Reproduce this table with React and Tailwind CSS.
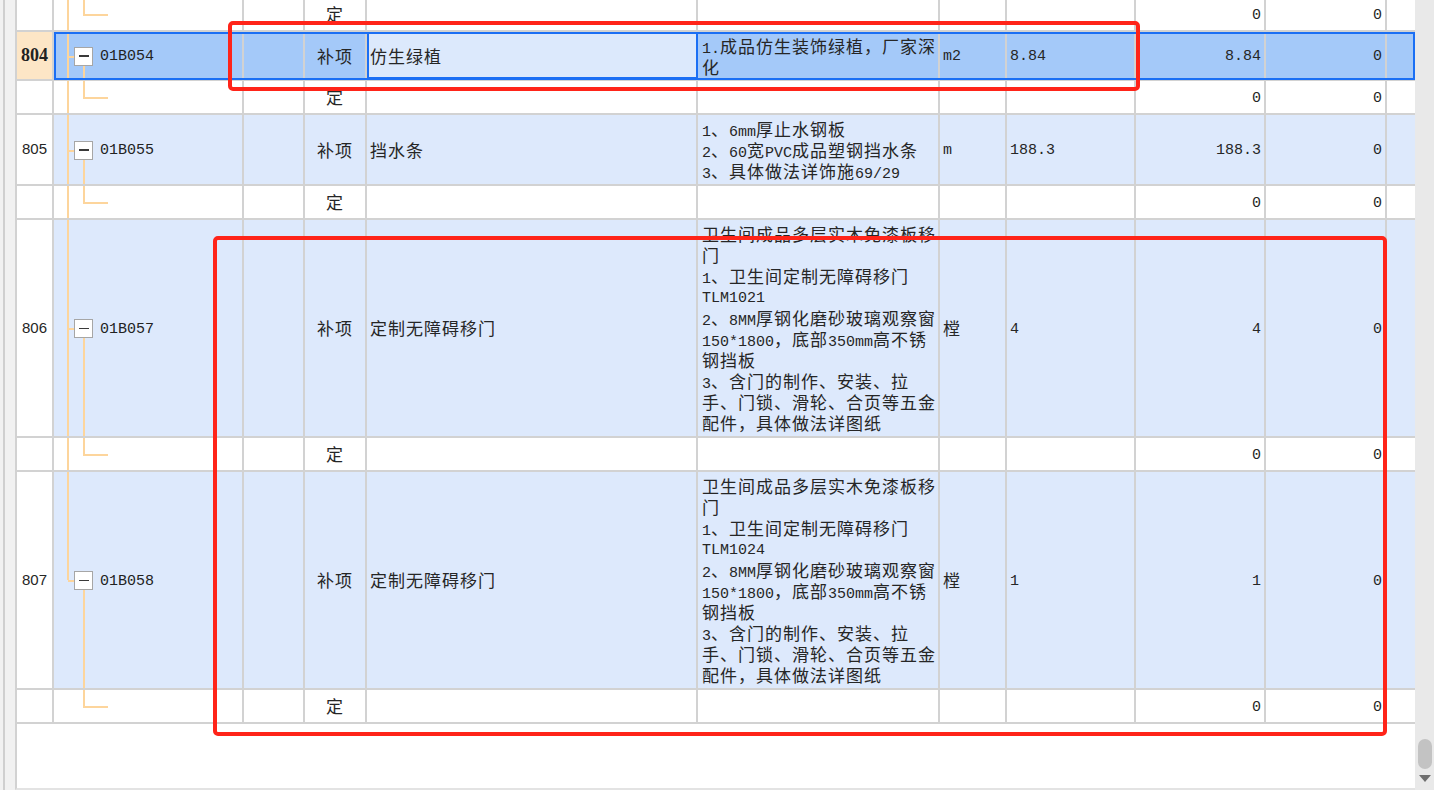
import React from 'react';

// column widths, line to line (x 17 .. 1415)
const W = [37, 190, 61, 62, 331, 242, 67, 129, 130, 121, 28];

const DOOR = (tlm) => [
  '卫生间成品多层实木免漆板移',
  '门',
  '1、卫生间定制无障碍移门',
  tlm,
  '2、8MM厚钢化磨砂玻璃观察窗',
  '150*1800，底部350mm高不锈',
  '钢挡板',
  '3、含门的制作、安装、拉',
  '手、门锁、滑轮、合页等五金',
  '配件，具体做法详图纸',
];

const ROWS = [
  { kind: 'ding', h: 'h-[34px] -mt-[2px]' },
  {
    kind: 'item',
    h: 'h-[49px]',
    num: '804',
    selected: true,
    code: '01B054',
    name: '仿生绿植',
    desc: ['1.成品仿生装饰绿植，厂家深', '化'],
    unit: 'm2',
    qty: '8.84',
    v1: '8.84',
  },
  { kind: 'ding', h: 'h-[34px]' },
  {
    kind: 'item',
    h: 'h-[71px]',
    num: '805',
    code: '01B055',
    name: '挡水条',
    desc: ['1、6mm厚止水钢板', '2、60宽PVC成品塑钢挡水条', '3、具体做法详饰施69/29'],
    unit: 'm',
    qty: '188.3',
    v1: '188.3',
  },
  { kind: 'ding', h: 'h-[34px]' },
  {
    kind: 'item',
    h: 'h-[218px]',
    num: '806',
    code: '01B057',
    name: '定制无障碍移门',
    desc: DOOR('TLM1021'),
    unit: '樘',
    qty: '4',
    v1: '4',
  },
  { kind: 'ding', h: 'h-[34px]' },
  {
    kind: 'item',
    h: 'h-[218px]',
    num: '807',
    code: '01B058',
    name: '定制无障碍移门',
    desc: DOOR('TLM1024'),
    unit: '樘',
    qty: '1',
    v1: '1',
    last: true,
  },
  { kind: 'ding', h: 'h-[34px]', last: true },
];

// SimSun-like mix: half-width latin, full-width CJK
const Txt = ({ s, nudge = false }) =>
  s
    .split(/([\x20-\x7e]+)/)
    .filter(Boolean)
    .map((p, i) =>
      /^[\x20-\x7e]+$/.test(p) ? (
        <span
          key={i}
          className={`font-['Liberation_Mono',monospace] text-[15px] ${nudge ? 'relative top-[2px]' : ''}`}
        >
          {p}
        </span>
      ) : (
        <span key={i} className="font-['Noto_Sans_CJK_SC',sans-serif] text-[17px] tracking-[1px]">
          {p}
        </span>
      )
    );

const Cell = ({ i, className = '', children }) => (
  <div
    style={{ width: W[i] }}
    className={`shrink-0 h-full flex items-center ${
      i < W.length - 1 ? 'border-r-2 border-[#d2d2d2]' : ''
    } ${className}`}
  >
    {children}
  </div>
);

const TreeItem = ({ last }) => (
  <>
    <div
      className={`absolute left-[13px] w-[2px] bg-[#fdd59c] top-0 ${last ? 'h-1/2' : 'bottom-0'}`}
    />
    <div className="absolute left-[14px] top-1/2 h-[2px] w-[6px] bg-[#fdd59c]" />
    <div className="absolute left-[29px] top-[calc(50%+9px)] bottom-0 w-[2px] bg-[#fdd59c]" />
    <div className="absolute left-[20px] top-[calc(50%-9px)] w-[19px] h-[19px] border-[1.5px] border-[#a6a6a6] bg-white flex items-center justify-center">
      <div className="w-[10px] h-[1.5px] bg-[#3a3a3a]" />
    </div>
  </>
);

const TreeLeaf = ({ last }) => (
  <>
    {!last && <div className="absolute left-[13px] w-[2px] bg-[#fdd59c] top-0 bottom-0" />}
    <div className="absolute left-[29px] top-0 h-1/2 w-[2px] bg-[#fdd59c]" />
    <div className="absolute left-[29px] top-1/2 h-[2px] w-[25px] bg-[#fdd59c]" />
  </>
);

const Row = ({ r }) => {
  const item = r.kind === 'item';
  const bg = item ? (r.selected ? 'bg-[#a4c9f9]' : 'bg-[#dde9fc]') : 'bg-white';
  return (
    <div className={`relative flex shrink-0 border-b-2 border-[#d2d2d2] text-[#262626] ${r.h}`}>
      <Cell
        i={0}
        className={`justify-center ${
          r.selected
            ? "bg-[#fde6c6] font-['Liberation_Serif',serif] font-bold text-[18px] text-[#222]"
            : "bg-white font-['Liberation_Sans',sans-serif] text-[15px]"
        }`}
      >
        {r.num}
      </Cell>
      <Cell i={1} className={`relative pl-[46px] ${bg}`}>
        {item ? <TreeItem last={r.last} /> : <TreeLeaf last={r.last} />}
        {item && (
          <span className="relative top-[2px] font-['Liberation_Mono',monospace] text-[15px] text-[#222]">
            {r.code}
          </span>
        )}
      </Cell>
      <Cell i={2} className={bg} />
      <Cell i={3} className={`justify-center ${bg}`}>
        <Txt s={item ? '补项' : '定'} />
      </Cell>
      <Cell
        i={4}
        className={`pl-[3px] ${
          r.selected ? 'bg-[#dce9fc] outline-2 -outline-offset-2 outline-[#1b6ff4]' : bg
        }`}
      >
        {item && <Txt s={r.name} />}
      </Cell>
      <Cell i={5} className={`pl-[4px] ${bg}`}>
        {item && (
          <div className="flex flex-col">
            {r.desc.map((l, k) => (
              <div key={k} className="h-[21px] leading-[21px] whitespace-nowrap">
                <Txt s={l} />
              </div>
            ))}
          </div>
        )}
      </Cell>
      <Cell i={6} className={`pl-[3px] ${bg}`}>
        {item && <Txt s={r.unit} nudge />}
      </Cell>
      <Cell i={7} className={`pl-[3px] ${bg}`}>
        {item && <Txt s={r.qty} nudge />}
      </Cell>
      <Cell i={8} className={`justify-end pr-[3px] ${bg}`}>
        <Txt s={item ? r.v1 : '0'} nudge />
      </Cell>
      <Cell i={9} className={`justify-end pr-[3px] ${bg}`}>
        <Txt s="0" nudge />
      </Cell>
      <Cell i={10} className={bg} />
      {r.selected && (
        <div className="absolute left-[37px] right-0 top-0 -bottom-[1px] border-2 border-[#1b6ff4] pointer-events-none" />
      )}
    </div>
  );
};

export default function App() {
  return (
    <div className="relative w-[1434px] h-[790px] overflow-hidden bg-white flex">
      {/* left gutter */}
      <div className="w-[15px] h-full shrink-0 flex bg-[#f1f1f1]">
        <div className="w-[3px]" />
        <div className="w-[2px] h-full bg-[#cfcfcf]" />
      </div>

      {/* grid */}
      <div className="flex-1 h-full flex flex-col border-l-2 border-[#d2d2d2] border-b-2 border-b-[#e3e3e3]">
        {ROWS.map((r, i) => (
          <Row key={i} r={r} />
        ))}
        <div className="flex-1 bg-white" />
      </div>

      {/* vertical scrollbar */}
      <div className="w-[19px] h-full shrink-0 bg-[#e9e9e9] flex flex-col items-center justify-end pb-[8px]">
        <div className="w-[14px] h-[30px] rounded-full bg-[#c3c3c3] mb-[6px]" />
        <div className="w-0 h-0 border-l-[6px] border-r-[6px] border-t-[7px] border-l-transparent border-r-transparent border-t-[#6f6f6f]" />
      </div>

      {/* red annotation boxes */}
      <div className="absolute left-[228px] top-[21px] w-[912px] h-[70px] border-4 border-[#ff2419] rounded-[5px] pointer-events-none" />
      <div className="absolute left-[213px] top-[236px] w-[1174px] h-[500px] border-4 border-[#ff2419] rounded-[5px] pointer-events-none" />
    </div>
  );
}
